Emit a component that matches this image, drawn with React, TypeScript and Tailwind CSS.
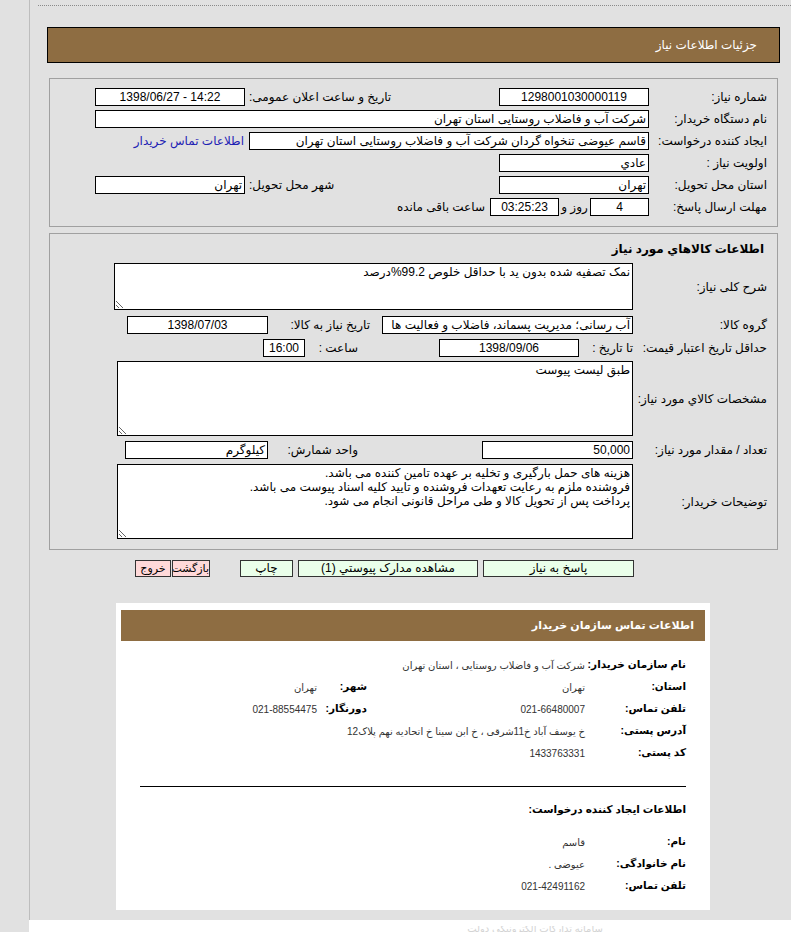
import React from "react";

const FONT = "font-['Liberation_Sans','DejaVu_Sans',sans-serif]";

function Box({ className = "", children, ltr }: { className?: string; children?: React.ReactNode; ltr?: boolean }) {
  return (
    <div
      dir={ltr ? "ltr" : undefined}
      className={`h-[18px] shrink-0 border border-black bg-white px-[2px] text-[12px] leading-[16px] whitespace-nowrap overflow-hidden ${className}`}
    >
      {children}
    </div>
  );
}

function Area({ className = "", value }: { className?: string; value: string }) {
  return (
    <textarea
      readOnly
      value={value}
      className={`shrink-0 resize border border-black bg-white px-[2px] py-[1px] text-[12px] leading-[14px] text-black outline-none ${FONT} ${className}`}
    />
  );
}

function Label({ className = "", children }: { className?: string; children: React.ReactNode }) {
  return <div className={`shrink-0 text-[12px] leading-[16px] whitespace-nowrap ${className}`}>{children}</div>;
}

function Btn({ className = "", children }: { className?: string; children: React.ReactNode }) {
  return (
    <div
      className={`h-[17px] shrink-0 border border-[#333] text-center leading-[15px] whitespace-nowrap overflow-hidden ${className}`}
    >
      {children}
    </div>
  );
}

function InfoRow({ label, value, label2, value2 }: { label: string; value: string; label2?: string; value2?: string }) {
  return (
    <div className="flex h-[22px] items-center">
      <div className="w-[101px] shrink-0 text-[10.5px] font-bold text-black whitespace-nowrap">{label}</div>
      <div className="w-[218px] shrink-0 text-[10px] text-[#333] whitespace-nowrap">{value}</div>
      {label2 && <div className="w-[50px] shrink-0 text-[10.5px] font-bold text-black whitespace-nowrap">{label2}</div>}
      {value2 && <div className="shrink-0 text-[10px] text-[#333] whitespace-nowrap">{value2}</div>}
    </div>
  );
}

export default function App() {
  return (
    <div className={`w-[791px] h-[932px] overflow-hidden bg-[#e1e1e1] text-black ${FONT}`}>
      <div className="flex h-[920px]">
        <div className="w-[29px] shrink-0" />
        <div className="flex-1 border-l border-[#bdbdbd]">
          <div className="mt-[5px] ml-[8px] border-t border-dotted border-[#8a8a8a]" />

          <div className="mt-[21px] ml-[17px] flex h-[36px] w-[733px] items-center border border-black bg-[#8e6d42] pr-[22px]" dir="rtl">
            <span className="text-[12px] text-white">جزئیات اطلاعات نیاز</span>
          </div>

          {/* اطلاعات اصلی */}
          <div dir="rtl" className="mt-[15px] ml-[19px] h-[149px] w-[729px] border border-[#a0a0a0] pt-[9px]">
            <div className="flex h-[18px] items-center">
              <Label className="w-[128px] pr-[10px]">شماره نیاز:</Label>
              <Box className="w-[150px] text-center">1298001030000119</Box>
              <Label className="w-[254px] pl-[4px] text-left">تاریخ و ساعت اعلان عمومی:</Label>
              <Box ltr className="w-[150px] text-center">1398/06/27 - 14:22</Box>
            </div>
            <div className="mt-[4px] flex h-[18px] items-center">
              <Label className="w-[128px] pr-[10px]">نام دستگاه خریدار:</Label>
              <Box className="w-[554px] text-right">شرکت آب و فاضلاب روستایی استان تهران</Box>
            </div>
            <div className="mt-[4px] flex h-[18px] items-center">
              <Label className="w-[128px] pr-[10px]">ایجاد کننده درخواست:</Label>
              <Box className="w-[400px] text-right">قاسم عیوضی تنخواه گردان شرکت آب و فاضلاب روستایی استان تهران</Box>
              <Label className="mr-[5px] text-[#1e22b4]">اطلاعات تماس خریدار</Label>
            </div>
            <div className="mt-[4px] flex h-[18px] items-center">
              <Label className="w-[128px] pr-[10px]">اولویت نیاز :</Label>
              <Box className="w-[150px] text-right">عادي</Box>
            </div>
            <div className="mt-[4px] flex h-[18px] items-center">
              <Label className="w-[128px] pr-[10px]">استان محل تحویل:</Label>
              <Box className="w-[150px] text-right">تهران</Box>
              <Label className="w-[254px] pl-[4px] text-left">شهر محل تحویل:</Label>
              <Box className="w-[150px] text-right">تهران</Box>
            </div>
            <div className="mt-[4px] flex h-[18px] items-center">
              <Label className="w-[128px] pr-[10px]">مهلت ارسال پاسخ:</Label>
              <Box className="w-[59px] text-center">4</Box>
              <Label className="w-[31px] text-center">روز و</Label>
              <Box className="w-[69px] text-center">03:25:23</Box>
              <Label className="mr-[5px]">ساعت باقی مانده</Label>
            </div>
          </div>

          {/* کالاها */}
          <div dir="rtl" className="mt-[6px] ml-[19px] h-[317px] w-[729px] border border-[#a0a0a0] pt-[7px]">
            <div className="pr-[13px] text-[12px] leading-[16px] font-bold">اطلاعات کالاهاي مورد نیاز</div>
            <div className="mt-[6px] flex items-center">
              <Label className="w-[144px] pr-[10px]">شرح کلی نیاز:</Label>
              <Area className="h-[47px] w-[519px]" value="نمک تصفیه شده بدون ید با حداقل خلوص 99.2%درصد" />
            </div>
            <div className="mt-[6px] flex h-[18px] items-center">
              <Label className="w-[144px] pr-[10px]">گروه کالا:</Label>
              <Box className="w-[251px] text-right">آب رسانی؛ مدیریت پسماند، فاضلاب و فعالیت ها</Box>
              <Label className="w-[114px] pr-[12px]">تاریخ نیاز به کالا:</Label>
              <Box className="w-[141px] text-center">1398/07/03</Box>
            </div>
            <div className="mt-[5px] flex h-[18px] items-center">
              <Label className="w-[144px] pr-[10px]">حداقل تاریخ اعتبار قیمت:</Label>
              <Label className="w-[54px]">تا تاریخ :</Label>
              <Box className="w-[140px] text-center">1398/09/06</Box>
              <Label className="w-[134px] pr-[81px]">ساعت :</Label>
              <Box className="w-[42px] text-center">16:00</Box>
            </div>
            <div className="mt-[4px] flex items-center">
              <Label className="w-[144px] pr-[10px]">مشخصات کالاي مورد نیاز:</Label>
              <Area className="h-[75px] w-[516px]" value="طبق لیست پیوست" />
            </div>
            <div className="mt-[5px] flex h-[18px] items-center">
              <Label className="w-[144px] pr-[10px]">تعداد / مقدار مورد نیاز:</Label>
              <Box className="w-[151px] text-right">50,000</Box>
              <Label className="w-[214px] pr-[124px]">واحد شمارش:</Label>
              <Box className="w-[143px] text-right">کیلوگرم</Box>
            </div>
            <div className="mt-[5px] flex items-center">
              <Label className="w-[144px] pr-[10px]">توضیحات خریدار:</Label>
              <Area
                className="h-[75px] w-[516px]"
                value={
                  "هزینه های حمل بارگیری و تخلیه بر عهده تامین کننده می باشد.\nفروشنده ملزم به رعایت تعهدات فروشنده و تایید کلیه اسناد پیوست می باشد.\nپرداخت پس از تحویل کالا و طی مراحل قانونی انجام می شود."
                }
              />
            </div>
          </div>

          {/* دکمه ها */}
          <div dir="rtl" className="mt-[10px] flex h-[17px] pr-[157px]">
            <Btn className="w-[151px] bg-[#eaffea] text-[12px]">پاسخ به نیاز</Btn>
            <Btn className="mr-[5px] w-[180px] bg-[#eaffea] text-[12px]">مشاهده مدارک پیوستي (1)</Btn>
            <Btn className="mr-[5px] w-[53px] bg-[#eaffea] text-[12px]">چاپ</Btn>
            <Btn className="mr-[30px] w-[38px] bg-[#ffd9d9] text-[11px]">بازگشت</Btn>
            <Btn className="mr-[1px] w-[36px] bg-[#ffd9d9] text-[11px]">خروج</Btn>
          </div>

          {/* اطلاعات تماس */}
          <div dir="rtl" className="mt-[26px] ml-[86px] h-[307px] w-[594px] bg-white pt-[7px]">
            <div className="mx-[5px] flex h-[31px] items-center bg-[#8e6d42] pr-[11px]">
              <span className="text-[11px] font-bold text-white">اطلاعات تماس سازمان خریدار</span>
            </div>
            <div className="mt-[13px] pr-[24px]">
              <InfoRow label="نام سازمان خریدار:" value="شرکت آب و فاضلاب روستایی ، استان تهران" />
              <InfoRow label="استان:" value="تهران" label2="شهر:" value2="تهران" />
              <InfoRow label="تلفن تماس:" value="021-66480007" label2="دورنگار:" value2="021-88554475" />
              <div className="flex h-[22px] items-center">
                <div className="w-[101px] shrink-0 text-[10.5px] font-bold">آدرس پستی:</div>
                <div className="text-[10px] text-[#333] whitespace-nowrap">خ یوسف آباد خ11شرقی ، خ ابن سینا خ اتحادیه نهم پلاک12</div>
              </div>
              <InfoRow label="کد پستی:" value="1433763331" />
            </div>
            <div className="mx-[24px] mt-[22px] border-t border-black" />
            <div className="mt-[12px] flex h-[22px] items-center pr-[24px] text-[10.5px] font-bold">
              اطلاعات ایجاد کننده درخواست:
            </div>
            <div className="mt-[10px] pr-[24px]">
              <InfoRow label="نام:" value="قاسم" />
              <InfoRow label="نام خانوادگی:" value="عیوضی ." />
              <InfoRow label="تلفن تماس:" value="021-42491162" />
            </div>
          </div>
        </div>
      </div>
      <div className="ml-[29px] h-[12px] bg-white pt-[6px] text-center">
        <span className="ml-[250px] block text-[10px] leading-[6px] overflow-hidden h-[6px] text-[#d4d4d4]">سامانه تدارکات الکترونیکی دولت</span>
      </div>
    </div>
  );
}
